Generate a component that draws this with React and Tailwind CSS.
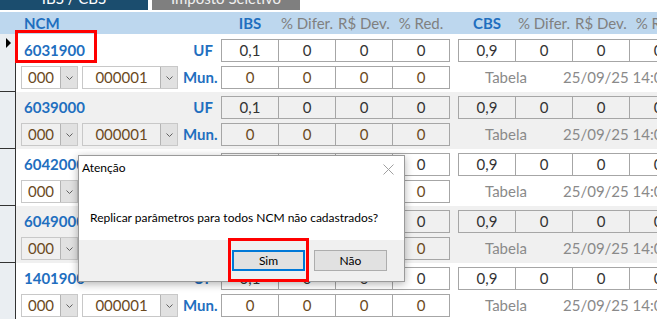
import React from 'react';

const BLUE = 'text-[#1f6fbf]';

function Cells({ values, color }) {
  return (
    <div className="flex shrink-0">
      {values.map((v, i) => (
        <div
          key={i}
          className={`w-[58px] h-[23px] shrink-0 border border-[#a6a6a6] flex items-center justify-center text-[15px] ${color} ${i > 0 ? '-ml-px' : ''}`}
        >
          {v}
        </div>
      ))}
    </div>
  );
}

function Combo({ w, text }) {
  return (
    <div className={`flex h-[23px] shrink-0 border border-[#c8c8c8] ${w}`}>
      <div className="flex-1 flex items-center justify-center text-[15px] text-[#6b4a1e]">{text}</div>
      <div className="w-[17px] bg-[#e1e1e1] border-l border-[#b4b4b4] flex items-center justify-center">
        <svg width="7" height="4" viewBox="0 0 7 4">
          <polyline points="0.5,0.5 3.5,3.5 6.5,0.5" fill="none" stroke="#606060" strokeWidth="1" />
        </svg>
      </div>
    </div>
  );
}

function HeaderCell({ children, bold, first }) {
  return (
    <div
      className={`w-[58px] shrink-0 text-center whitespace-nowrap text-[15px] ${first ? '' : '-ml-px'} ${
        bold ? 'font-bold text-[#1f6fbf]' : 'text-[#808080]'
      }`}
    >
      {children}
    </div>
  );
}

const rows = [
  { ncm: '6031900', h: 'h-[58px] pt-[5px]', bg: 'bg-white', sel: true },
  { ncm: '6039000', h: 'h-[57px] pt-[4px]', bg: 'bg-[#f0f0f0]' },
  { ncm: '6042000', h: 'h-[57px] pt-[4px]', bg: 'bg-white' },
  { ncm: '6049000', h: 'h-[57px] pt-[4px]', bg: 'bg-[#f0f0f0]' },
  { ncm: '1401900', h: 'h-[57px] pt-[4px]', bg: 'bg-white' },
];

function Row({ ncm, h, bg, sel }) {
  return (
    <div className={`flex ${bg}`}>
      <div className="w-[16px] shrink-0 bg-[#eaeef2] border-r border-b border-[#333333] relative">
        {sel && (
          <svg className="absolute left-[5px] top-[4px]" width="7" height="11" viewBox="0 0 7 11">
            <polygon points="1,0 6,5 1,10" fill="#000" />
          </svg>
        )}
      </div>
      <div className={`flex flex-col gap-[4px] ${h}`}>
        <div className="flex items-center h-[23px]">
          <div className="w-[205px] shrink-0 flex items-center justify-between pl-[8px] pr-[8px]">
            <span className={`font-bold text-[15px] ${BLUE}`}>{ncm}</span>
            <span className={`font-bold text-[15px] ${BLUE}`}>UF</span>
          </div>
          <Cells values={['0,1', '0', '0', '0']} color="text-[#333333]" />
          <div className="w-[8px] shrink-0" />
          <Cells values={['0,9', '0', '0', '0']} color="text-[#333333]" />
        </div>
        <div className="flex items-center h-[23px]">
          <div className="w-[205px] shrink-0 flex items-center pl-[5px]">
            <Combo w="w-[57px]" text="000" />
            <div className="w-[4px] shrink-0" />
            <Combo w="w-[96px]" text="000001" />
            <span className={`ml-[5px] font-bold text-[15px] ${BLUE}`}>Mun.</span>
          </div>
          <Cells values={['0', '0', '0', '0']} color="text-[#6b4a1e]" />
          <div className="w-[8px] shrink-0" />
          <div className="flex items-center whitespace-nowrap text-[15px] text-[#8a8a8a]">
            <span className="w-[105px] shrink-0 pl-[27px]">Tabela</span>
            <span>25/09/25 14:09</span>
          </div>
        </div>
      </div>
    </div>
  );
}

export default function App() {
  return (
    <div className="relative w-[657px] h-[319px] overflow-hidden bg-white font-['Lato',sans-serif]">
      <div className="flex h-[10px] gap-[4px]">
        <div className="w-[148px] shrink-0 bg-[#1b4d6e] overflow-hidden flex justify-center">
          <span className="-mt-[12px] leading-[20px] text-[15px] text-white whitespace-nowrap">IBS / CBS</span>
        </div>
        <div className="w-[148px] shrink-0 bg-[#7f7f7f] overflow-hidden flex justify-center">
          <span className="-mt-[12px] leading-[20px] text-[15px] text-[#f0f0f0] whitespace-nowrap">Imposto Seletivo</span>
        </div>
      </div>
      <div className="h-[2px]" />
      <div className="flex items-center h-[22px] bg-[#bdd7ee]">
        <div className="w-[16px] shrink-0" />
        <div className="w-[205px] shrink-0 pl-[8px]">
          <span className={`font-bold text-[15px] ${BLUE}`}>NCM</span>
        </div>
        <HeaderCell bold first>IBS</HeaderCell>
        <HeaderCell>% Difer.</HeaderCell>
        <HeaderCell>R$ Dev.</HeaderCell>
        <HeaderCell>% Red.</HeaderCell>
        <div className="w-[8px] shrink-0" />
        <HeaderCell bold first>CBS</HeaderCell>
        <HeaderCell>% Difer.</HeaderCell>
        <HeaderCell>R$ Dev.</HeaderCell>
        <HeaderCell>% Red.</HeaderCell>
      </div>
      {rows.map((r) => (
        <Row key={r.ncm} {...r} />
      ))}

      {/* annotation: NCM */}
      <div className="absolute left-[15px] top-[30px] w-[82px] h-[33px] border-[3px] border-[#ff0000]" />

      {/* dialog */}
      <div className="absolute left-[78px] top-[155px] w-[327px] h-[127px] border border-[#9a9a9a] bg-white shadow-[0_2px_8px_rgba(0,0,0,0.3)] flex flex-col z-10">
        <div className="h-[30px] shrink-0 flex items-start justify-between pl-[3px] pt-[4px] pr-[10px]">
          <span className="text-[12px] leading-[16px] text-black">Atenção</span>
          <svg className="mt-[4px]" width="11" height="11" viewBox="0 0 11 11">
            <line x1="0.5" y1="0.5" x2="10.5" y2="10.5" stroke="#a0a0a0" strokeWidth="1" />
            <line x1="10.5" y1="0.5" x2="0.5" y2="10.5" stroke="#a0a0a0" strokeWidth="1" />
          </svg>
        </div>
        <div className="h-[54px] shrink-0 pl-[11px] pt-[18px]">
          <span className="text-[12px] leading-[16px] text-black whitespace-nowrap">
            Replicar parâmetros para todos NCM não cadastrados?
          </span>
        </div>
        <div className="h-[41px] shrink-0 bg-[#f0f0f0] flex justify-end items-start pt-[10px] pr-[17px] gap-[9px]">
          <button className="w-[73px] h-[21px] border-2 border-[#0078d7] bg-[#e1e1e1] text-[12px] text-black flex items-center justify-center">
            Sim
          </button>
          <button className="w-[73px] h-[21px] border border-[#adadad] bg-[#e1e1e1] text-[12px] text-black flex items-center justify-center">
            Não
          </button>
        </div>
      </div>

      {/* annotation: Sim */}
      <div className="absolute left-[228px] top-[238px] w-[81px] h-[44px] border-[3px] border-[#ff0000] z-20" />
    </div>
  );
}
